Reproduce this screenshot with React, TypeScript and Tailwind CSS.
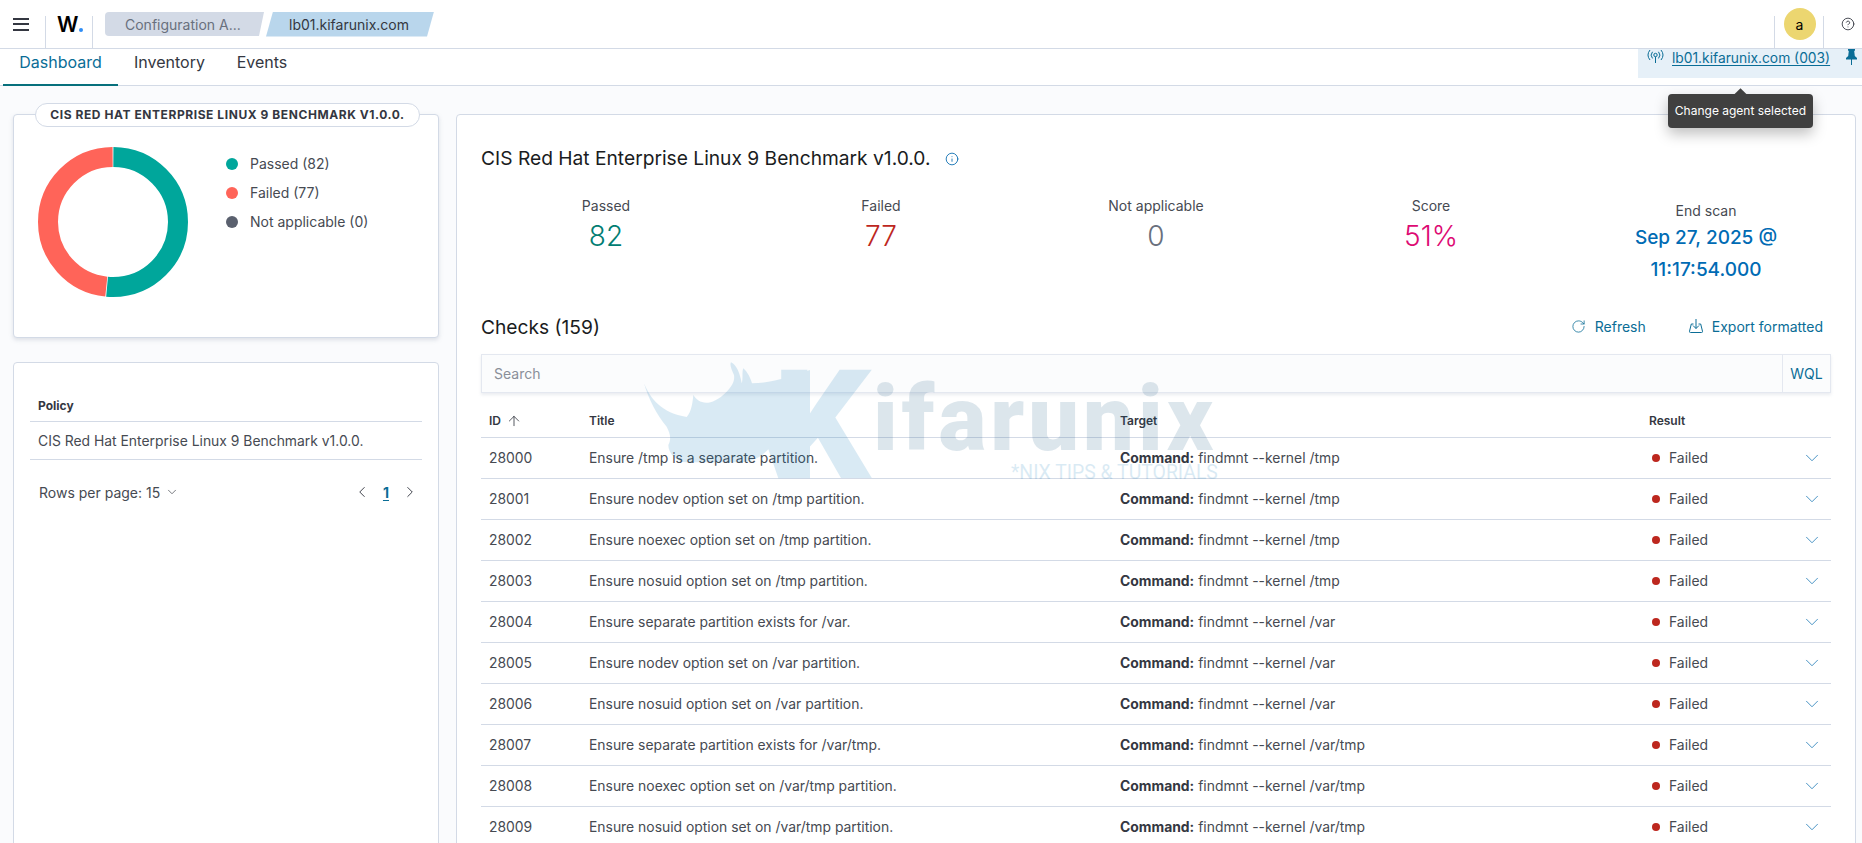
import React from "react";
import { ArrowUp, ChevronDown, ChevronLeft, ChevronRight, CircleHelp, Info, RotateCw } from "lucide-react";

const checks = [
  { id: 28000, title: "Ensure /tmp is a separate partition.", target: "findmnt --kernel /tmp" },
  { id: 28001, title: "Ensure nodev option set on /tmp partition.", target: "findmnt --kernel /tmp" },
  { id: 28002, title: "Ensure noexec option set on /tmp partition.", target: "findmnt --kernel /tmp" },
  { id: 28003, title: "Ensure nosuid option set on /tmp partition.", target: "findmnt --kernel /tmp" },
  { id: 28004, title: "Ensure separate partition exists for /var.", target: "findmnt --kernel /var" },
  { id: 28005, title: "Ensure nodev option set on /var partition.", target: "findmnt --kernel /var" },
  { id: 28006, title: "Ensure nosuid option set on /var partition.", target: "findmnt --kernel /var" },
  { id: 28007, title: "Ensure separate partition exists for /var/tmp.", target: "findmnt --kernel /var/tmp" },
  { id: 28008, title: "Ensure noexec option set on /var/tmp partition.", target: "findmnt --kernel /var/tmp" },
  { id: 28009, title: "Ensure nosuid option set on /var/tmp partition.", target: "findmnt --kernel /var/tmp" },
];

const legend = [
  { label: "Passed (82)", dot: "bg-[#00a69b]" },
  { label: "Failed (77)", dot: "bg-[#ff6459]" },
  { label: "Not applicable (0)", dot: "bg-[#5a606e]" },
];

function Header() {
  return (
    <div className="flex h-[49px] items-stretch border-b border-[#d3dae6] bg-white">
      <div className="flex w-[45px] items-center pl-[13px]">
        <div className="flex w-[16px] flex-col gap-[3.5px]">
          <div className="h-[2px] bg-[#343741]" />
          <div className="h-[2px] bg-[#343741]" />
          <div className="h-[2px] bg-[#343741]" />
        </div>
      </div>
      <div className="mt-[16px] w-px bg-[#d3dae6]" />
      <div className="flex w-[46px] items-center pl-[11px]">
        <span className="text-[21px] leading-none font-semibold text-black">W</span>
        <span className="mt-[11px] ml-[1px] h-[4px] w-[4px] rounded-full bg-[#2f8df5]" />
      </div>
      <div className="mt-[16px] w-px bg-[#d3dae6]" />
      <div className="ml-[12px] flex items-center gap-[2px]">
        <div className="flex h-[24px] w-[159px] items-center rounded-l-[4px] bg-[#d3dae6] pl-[20px] text-[14px] text-[#69707d] [clip-path:polygon(0_0,100%_0,calc(100%-5px)_100%,0_100%)]">
          Configuration A...
        </div>
        <div className="flex h-[25px] w-[168px] items-center bg-[#b9d6ec] pl-[23px] text-[14px] text-[#343741] [clip-path:polygon(7px_0,100%_0,calc(100%-7px)_100%,0_100%)]">
          lb01.kifarunix.com
        </div>
      </div>
      <div className="flex-1" />
      <div className="mt-[16px] w-px bg-[#d3dae6]" />
      <div className="flex w-[48px] items-center justify-center pl-[1px]">
        <div className="flex h-[32px] w-[32px] items-center justify-center rounded-full bg-[#ecd670] text-[14px] text-black">a</div>
      </div>
      <div className="mt-[16px] w-px bg-[#d3dae6]" />
      <div className="flex w-[38px] items-center justify-center pl-[10px] text-[#343741]">
        <CircleHelp size={14} strokeWidth={1.5} />
      </div>
    </div>
  );
}

function Tabs() {
  return (
    <div className="relative flex h-[37px] items-start justify-between border-b border-[#d3dae6] bg-white pl-[3px]">
      <div className="flex text-[16px] text-[#343741]">
        <div className="flex h-[37px] w-[115px] items-start justify-center border-b-2 border-[#07707c] pt-[1px] text-[#0a6d96]">Dashboard</div>
        <div className="flex h-[37px] w-[103px] items-start justify-center pt-[1px]">Inventory</div>
        <div className="flex h-[37px] w-[82px] items-start justify-center pt-[1px]">Events</div>
      </div>
      <div className="flex h-[29px] w-[224px] items-start bg-[#e6f0f8] pl-[9px] text-[#0a6d96]">
        <svg width="17" height="16" viewBox="0 0 17 16" fill="none" stroke="currentColor" strokeWidth="1">
          <circle cx="8.5" cy="6" r="1.7" />
          <path d="M8.5 7.7V14" />
          <path d="M5.5 2.8a5 5 0 0 0 0 6.6M11.5 2.8a5 5 0 0 1 0 6.6" />
          <path d="M3 1a8 8 0 0 0 0 10M14 1a8 8 0 0 1 0 10" />
        </svg>
        <span className="ml-[8px] text-[13.8px] leading-[18px] underline underline-offset-2">lb01.kifarunix.com (003)</span>
        <svg className="ml-[16px]" width="11" height="16" viewBox="0 0 11 16" fill="currentColor">
          <path d="M2 0h7v1.5L8.2 2l.6 5 2.2 2v1.5H6V16H5v-5.500H0V9l2.200-2 .6-5L2 1.500z" />
        </svg>
      </div>
      <div className="absolute top-[45px] right-[49px] z-20 rounded-[4px] bg-[#404040] px-[7px] py-[8px] text-[12px] leading-[18px] whitespace-nowrap text-white shadow-[0_6px_14px_rgba(0,0,0,0.25)]">
        <div className="absolute -top-[4px] left-[68px] h-[9px] w-[9px] rotate-45 bg-[#404040]" />
        Change agent selected
      </div>
    </div>
  );
}

function Donut() {
  return (
    <svg width="150" height="150" viewBox="0 0 150 150" className="shrink-0">
      <g transform="rotate(-90 75 75)" fill="none" strokeWidth="20">
        <circle cx="75" cy="75" r="65" stroke="#ffffff" />
        <circle cx="75" cy="75" r="65" stroke="#00a69b" pathLength={159} strokeDasharray="81.7 77.3" strokeDashoffset="-0.15" />
        <circle cx="75" cy="75" r="65" stroke="#ff6459" pathLength={159} strokeDasharray="76.7 82.3" strokeDashoffset="-82.15" />
      </g>
    </svg>
  );
}

function SideColumn() {
  return (
    <div className="flex w-[426px] shrink-0 flex-col gap-[24px]">
      <div className="relative h-[224px] rounded-[4px] border border-[#d3dae6] bg-white pt-[32px] pl-[24px] shadow-[0_2px_4px_rgba(152,162,179,0.3)]">
        <div className="absolute -top-[12px] left-[21px] flex h-[24px] w-[385px] items-center justify-center rounded-full border border-[#d3dae6] bg-white text-[12px] font-bold tracking-[0.57px] whitespace-nowrap text-[#343741] uppercase">
          CIS Red Hat Enterprise Linux 9 Benchmark v1.0.0.
        </div>
        <div className="flex gap-[38px]">
          <Donut />
          <div className="flex flex-col pt-[2px]">
            {legend.map(l => (
              <div key={l.label} className="flex h-[29px] items-center gap-[12px] text-[14px] text-[#464a52]">
                <span className={`h-[12px] w-[12px] rounded-full ${l.dot}`} />
                {l.label}
              </div>
            ))}
          </div>
        </div>
      </div>
      <div className="h-[600px] rounded-[4px] border border-[#d3dae6] bg-white px-[16px] pt-[34px]">
        <div className="flex h-[25px] items-start border-b border-[#d3dae6] pl-[8px] text-[12px] leading-[18px] font-bold text-[#343741]">Policy</div>
        <div className="flex h-[38px] items-center border-b border-[#d3dae6] pt-[1px] pl-[8px] text-[13.9px] text-[#464a52]">CIS Red Hat Enterprise Linux 9 Benchmark v1.0.0.</div>
        <div className="mt-[22px] flex h-[20px] items-center pr-[3px] pl-[9px] text-[14px] text-[#464a52]">
          <span>Rows per page: 15</span>
          <ChevronDown size={14} strokeWidth={1.25} className="ml-[5px]" />
          <div className="flex-1" />
          <ChevronLeft size={18} strokeWidth={1.25} className="text-[#343741]" />
          <span className="mx-[12px] font-bold text-[#0a6d96] underline underline-offset-2">1</span>
          <ChevronRight size={18} strokeWidth={1.25} className="text-[#343741]" />
        </div>
      </div>
    </div>
  );
}

function Stat({ label, value, color }: { label: string; value: string; color: string }) {
  return (
    <div className="flex flex-1 flex-col items-center">
      <div className="text-[14px] leading-[20px] text-[#464a52]">{label}</div>
      <div className={`text-[28px] leading-[40px] font-light ${color}`}>{value}</div>
    </div>
  );
}

function ChecksPanel() {
  return (
    <div className="h-[800px] flex-1 rounded-[4px] border border-[#d3dae6] bg-white px-[24px] pt-[31px]">
      <div className="flex h-[24px] items-center text-[19.2px] font-normal text-[#1a1c21]">
        CIS Red Hat Enterprise Linux 9 Benchmark v1.0.0.
        <Info size={14} strokeWidth={1.5} className="mt-[2px] ml-[15px] text-[#0a6db0]" />
      </div>

      <div className="mt-[26px] flex h-[90px] gap-[25px]">
        <Stat label="Passed" value="82" color="text-[#017d73]" />
        <Stat label="Failed" value="77" color="text-[#bd271e]" />
        <Stat label="Not applicable" value="0" color="text-[#69707d]" />
        <Stat label="Score" value="51%" color="text-[#dd0a73]" />
        <div className="flex flex-1 flex-col items-center pt-[5px] text-center">
          <div className="text-[14px] leading-[20px] text-[#464a52]">End scan</div>
          <div className="mt-[1px] text-[19px] leading-[32px] font-medium text-[#006bb4]">
            Sep 27, 2025 @
            <br />
            11:17:54.000
          </div>
        </div>
      </div>

      <div className="mt-[29px] flex h-[24px] items-center justify-between">
        <div className="text-[19.2px] text-[#1a1c21]">Checks (159)</div>
        <div className="-mt-[2px] flex items-center pr-[8px] text-[14px] text-[#0a6d96]">
          <RotateCw size={15} strokeWidth={1.25} />
          <span className="ml-[9px]">Refresh</span>
          <svg className="ml-[42px]" width="16" height="16" viewBox="0 0 16 16" fill="none" stroke="currentColor" strokeWidth="1">
            <path d="M5.5 6H3.300L1.500 13.300a1 1 0 0 0 1 1.200h11a1 1 0 0 0 1-1.200L12.700 6H10.500" />
            <path d="M8 1v9.500M5 7.500l3 3 3-3" />
          </svg>
          <span className="ml-[8px]">Export formatted</span>
        </div>
      </div>

      <div className="mt-[15px] flex h-[39px] items-stretch border border-[#e4e8f0] bg-[#fbfcfd] shadow-[0_2px_3px_rgba(152,162,179,0.2)]">
        <div className="flex flex-1 items-center pl-[12px] text-[14px] text-[#8a8f99]">Search</div>
        <div className="flex w-[48px] items-center justify-center border-l border-[#e4e8f0] text-[14px] text-[#0a6d96]">WQL</div>
      </div>

      <table className="w-full table-fixed border-collapse">
        <colgroup>
          <col className="w-[100px]" />
          <col className="w-[531px]" />
          <col className="w-[529px]" />
          <col className="w-[139px]" />
          <col />
        </colgroup>
        <thead>
          <tr className="h-[44px] border-b border-[#d3dae6] text-left text-[12px] font-bold text-[#343741]">
            <th className="pt-[13px] pl-[8px] font-semibold">
              <span className="flex items-center gap-[5px]">
                ID <ArrowUp size={16} strokeWidth={1.25} />
              </span>
            </th>
            <th className="pt-[13px] pl-[8px] font-semibold">Title</th>
            <th className="pt-[13px] pl-[8px] font-semibold">Target</th>
            <th className="pt-[13px] pl-[8px] font-semibold">Result</th>
            <th />
          </tr>
        </thead>
        <tbody>
          {checks.map(c => (
            <tr key={c.id} className="h-[41px] border-b border-[#d3dae6] text-[13.9px] text-[#464a52]">
              <td className="pt-[1px] pl-[8px]">{c.id}</td>
              <td className="pt-[1px] pl-[8px]">{c.title}</td>
              <td className="pt-[1px] pl-[8px]">
                <span className="font-bold text-[#343741]">Command:</span> {c.target}
              </td>
              <td className="pt-[1px] pl-[8px]">
                <span className="flex items-center">
                  <span className="ml-[3px] h-[8px] w-[8px] rounded-full bg-[#bd271e]" />
                  <span className="ml-[9px]">Failed</span>
                </span>
              </td>
              <td>
                <span className="flex justify-end pr-[8px] text-[#0a6db0]">
                  <ChevronDown size={22} strokeWidth={0.8} />
                </span>
              </td>
            </tr>
          ))}
        </tbody>
      </table>
    </div>
  );
}

// site watermark stamped over the screenshot
function Watermark() {
  return (
    <div className="pointer-events-none absolute top-[355px] left-[630px] z-10 h-[135px] w-[600px] opacity-[0.15] [font-family:Roboto,sans-serif]">
      <svg className="absolute top-0 left-0" width="260" height="135" viewBox="0 0 780 405" fill="#0a78b8">
        <path d="M42 85C60 130 95 175 170 186C185 170 188 140 190 120C205 145 240 160 290 110C305 95 315 80 312 60C306 45 298 30 303 22C320 30 330 55 335 85C340 70 335 50 340 40C352 50 362 70 366 85C430 85 490 60 540 45L540 370L445 370L415 283C390 310 360 322 320 322L170 322C140 322 115 295 115 270C125 250 120 235 110 215C80 180 55 130 42 85Z" />
      </svg>
      <span className="absolute top-[-5px] left-[143px] text-[152px] leading-none font-black text-[#0a78b8]">K</span>
      <span className="absolute top-[21px] left-[243px] text-[90px] leading-[88px] font-black tracking-[4px] text-[#1d5c85]">ifarunix</span>
      <span className="absolute top-[106px] left-[381px] text-[19.400px] leading-[24px] font-normal whitespace-nowrap text-[#0a78b8]">*NIX TIPS &amp; TUTORIALS</span>
    </div>
  );
}

export default function App() {
  return (
    <div className="relative h-[843px] w-[1862px] overflow-hidden bg-[#fafbfd] [font-family:Inter,sans-serif]">
      <Header />
      <Tabs />
      <div className="flex gap-[17px] pt-[28px] pr-[6px] pl-[13px]">
        <SideColumn />
        <ChecksPanel />
      </div>
      <Watermark />
    </div>
  );
}
